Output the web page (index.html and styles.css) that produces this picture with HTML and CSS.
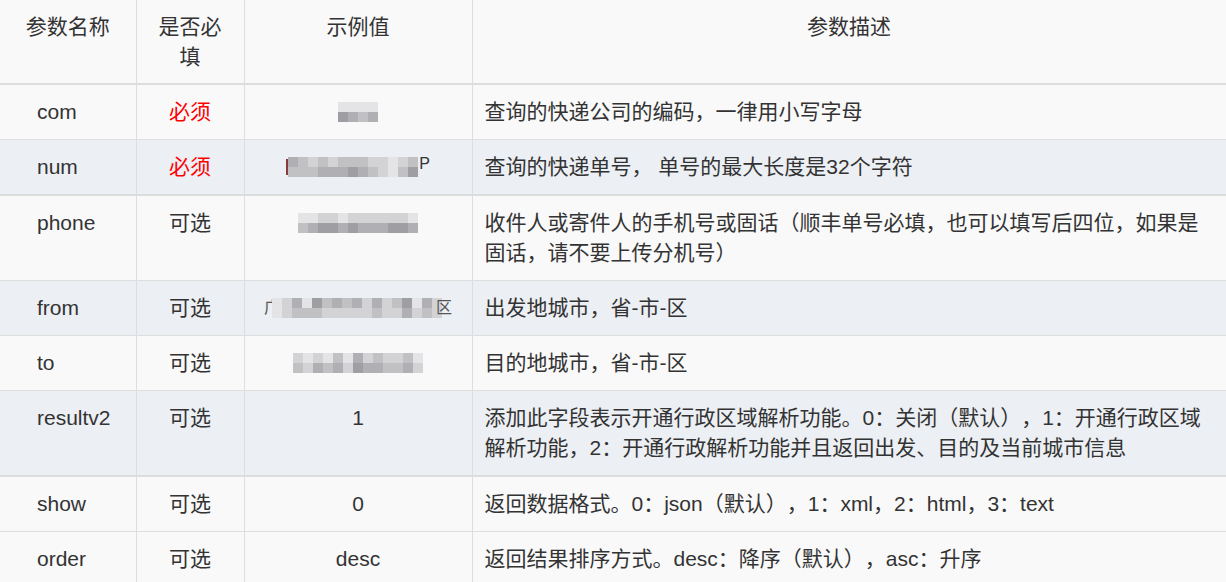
FILE: index.html
```html
<!DOCTYPE html>
<html lang="zh-CN">
<head>
<meta charset="utf-8">
<title>参数说明</title>
<link rel="stylesheet" href="styles.css">
</head>
<body>
<table class="params">
  <colgroup>
    <col class="c-name">
    <col class="c-req">
    <col class="c-ex">
    <col class="c-desc">
  </colgroup>
  <thead>
    <tr>
      <th>参数名称</th>
      <th>是否必填</th>
      <th>示例值</th>
      <th>参数描述</th>
    </tr>
  </thead>
  <tbody>
    <tr>
      <td class="name">com</td>
      <td class="req must">必须</td>
      <td class="ex"><span class="mosaic w4"><i class="s1"></i><i class="s5"></i><i class="s1"></i><i class="s4"></i><i class="s1"></i><i class="s3"></i><i class="s1"></i><i class="s4"></i></span></td>
      <td class="desc">查询的快递公司的编码，一律用小写字母</td>
    </tr>
    <tr class="alt thick">
      <td class="name">num</td>
      <td class="req must">必须</td>
      <td class="ex"><span class="mark"></span><span class="mosaic"><i class="s4"></i><i class="s3"></i><i class="s3"></i><i class="s3"></i><i class="s2"></i><i class="s3"></i><i class="s3"></i><i class="s4"></i><i class="s2"></i><i class="s4"></i><i class="s3"></i><i class="s4"></i><i class="s3"></i><i class="s5"></i><i class="s3"></i><i class="s4"></i><i class="s2"></i><i class="s3"></i><i class="s2"></i><i class="s2"></i><i class="s1"></i><i class="s1"></i><i class="s2"></i><i class="s3"></i><i class="s3"></i><i class="s5"></i></span><span class="tail">P</span></td>
      <td class="desc">查询的快递单号， 单号的最大长度是32个字符</td>
    </tr>
    <tr>
      <td class="name">phone</td>
      <td class="req">可选</td>
      <td class="ex"><span class="mosaic"><i class="s1"></i><i class="s3"></i><i class="s1"></i><i class="s4"></i><i class="s2"></i><i class="s5"></i><i class="s2"></i><i class="s5"></i><i class="s1"></i><i class="s4"></i><i class="s2"></i><i class="s5"></i><i class="s2"></i><i class="s4"></i><i class="s2"></i><i class="s4"></i><i class="s2"></i><i class="s4"></i><i class="s2"></i><i class="s5"></i><i class="s2"></i><i class="s5"></i><i class="s1"></i><i class="s4"></i></span></td>
      <td class="desc">收件人或寄件人的手机号或固话（顺丰单号必填，也可以填写后四位，如果是固话，请不要上传分机号）</td>
    </tr>
    <tr class="alt">
      <td class="name">from</td>
      <td class="req">可选</td>
      <td class="ex"><span class="frag lead">广</span><span class="mosaic"><i class="s1"></i><i class="s1"></i><i class="s2"></i><i class="s2"></i><i class="s4"></i><i class="s3"></i><i class="s1"></i><i class="s3"></i><i class="s5"></i><i class="s3"></i><i class="s3"></i><i class="s2"></i><i class="s4"></i><i class="s2"></i><i class="s3"></i><i class="s2"></i><i class="s4"></i><i class="s2"></i><i class="s2"></i><i class="s2"></i><i class="s4"></i><i class="s3"></i><i class="s2"></i><i class="s2"></i><i class="s3"></i><i class="s2"></i><i class="s5"></i><i class="s4"></i><i class="s1"></i><i class="s2"></i><i class="s4"></i><i class="s3"></i><i class="s2"></i><i class="s2"></i></span><span class="frag trail">区</span></td>
      <td class="desc">出发地城市，省-市-区</td>
    </tr>
    <tr>
      <td class="name">to</td>
      <td class="req">可选</td>
      <td class="ex"><span class="mosaic"><i class="s2"></i><i class="s3"></i><i class="s1"></i><i class="s2"></i><i class="s2"></i><i class="s4"></i><i class="s1"></i><i class="s3"></i><i class="s3"></i><i class="s4"></i><i class="s1"></i><i class="s2"></i><i class="s4"></i><i class="s5"></i><i class="s2"></i><i class="s4"></i><i class="s3"></i><i class="s4"></i><i class="s2"></i><i class="s3"></i><i class="s2"></i><i class="s3"></i><i class="s3"></i><i class="s4"></i><i class="s1"></i><i class="s2"></i></span></td>
      <td class="desc">目的地城市，省-市-区</td>
    </tr>
    <tr class="alt thick">
      <td class="name">resultv2</td>
      <td class="req">可选</td>
      <td class="ex">1</td>
      <td class="desc">添加此字段表示开通行政区域解析功能。0：关闭（默认），1：开通行政区域解析功能，2：开通行政解析功能并且返回出发、目的及当前城市信息</td>
    </tr>
    <tr>
      <td class="name">show</td>
      <td class="req">可选</td>
      <td class="ex">0</td>
      <td class="desc">返回数据格式。0：json（默认），1：xml，2：html，3：text</td>
    </tr>
    <tr>
      <td class="name">order</td>
      <td class="req">可选</td>
      <td class="ex">desc</td>
      <td class="desc">返回结果排序方式。desc：降序（默认），asc：升序</td>
    </tr>
  </tbody>
</table>
</body>
</html>
```

FILE: styles.css
```css
html, body {
  margin: 0;
  padding: 0;
  background: #f9f9f9;
}

body {
  font-family: "Liberation Sans", "Noto Sans CJK SC", sans-serif;
  font-size: 21px;
  line-height: 30px;
  color: #333333;
  overflow: hidden;
  text-spacing-trim: space-all;
}

.params {
  width: 1226px;
  table-layout: fixed;
  border-collapse: collapse;
  border-spacing: 0;
  background: #f9f9f9;
}

.c-name { width: 136px; }
.c-req { width: 108px; }
.c-ex { width: 228px; }
.c-desc { width: 754px; }

.params th,
.params td {
  vertical-align: top;
  border-left: 1px solid #dedede;
  border-right: 1px solid #dedede;
}

.params tr > :first-child { border-left: none; }

.params th {
  font-weight: normal;
  text-align: center;
  padding: 12px 12px 11px;
  border-bottom: 2px solid #dddddd;
}

.params td {
  padding: 12px 12px;
  border-bottom: 1px solid #dedede;
}

.params tr.thick td { border-bottom: 2px solid #dddddd; }

.params tr.alt td { background: #eceff4; }

.params td.name {
  text-align: left;
  padding-left: 37px;
}

.params td.req,
.params td.ex { text-align: center; }

.params td.must { color: #ff0000; }

.params td.desc { text-align: left; }

/* blurred example values */
.ex { white-space: nowrap; }

.mosaic {
  display: inline-grid;
  grid-template-rows: 10px 10px;
  grid-auto-flow: column;
  grid-auto-columns: 10px;
  vertical-align: middle;
  margin-top: -3px;
}

.mosaic i { display: block; }

.mosaic .s1 { background: #e4e4e6; }
.mosaic .s2 { background: #d3d3d5; }
.mosaic .s3 { background: #c1c1c4; }
.mosaic .s4 { background: #b0afb3; }
.mosaic .s5 { background: #9e9ea3; }

.mark {
  display: inline-block;
  width: 2px;
  height: 16px;
  background: #8a3a3a;
  vertical-align: middle;
  margin-top: -3px;
}

.tail {
  display: inline-block;
  font-size: 16px;
  vertical-align: middle;
  margin-top: -8px;
  margin-left: 1px;
}

.frag {
  display: inline-block;
  vertical-align: middle;
  font-size: 16px;
  line-height: 20px;
  margin-top: -3px;
  color: #555;
}

.frag.lead { margin-right: -8px; }
.frag.trail { margin-left: -6px; }
```
